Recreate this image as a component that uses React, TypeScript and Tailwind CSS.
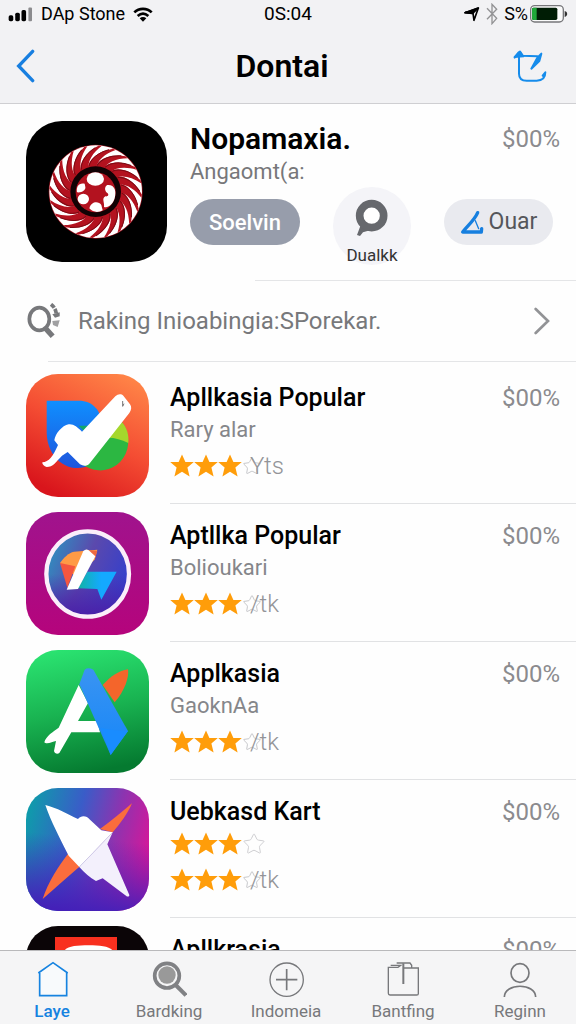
import type { ReactNode } from 'react'
import { Star } from 'lucide-react'

const blades = Array.from({ length: 20 }, (_, i) => i * 18)

function WheelArt() {
  return (
    <svg viewBox="78 48 423 423" className="h-full w-full" aria-hidden="true">
      <rect x="78" y="48" width="423" height="423" fill="#000" />
      <g transform="translate(287 260)">
        <circle r="141" fill="#8f0d18" />
        <circle r="139" fill="#fff" />
        {blades.map((angle) => (
          <g key={angle} transform={`rotate(${angle})`}>
            <path d="M-24 -70C-22 -96 6 -122 52 -129L60 -125C28 -114 4 -94 0 -68Z" fill="#b3121f" />
            <path d="M-20 -76C-16 -98 8 -118 40 -126" fill="none" stroke="#7c0a14" strokeWidth="3" />
          </g>
        ))}
        <circle r="76" fill="#120204" />
      </g>
      <circle cx="287" cy="262" r="60" fill="#b3121f" />
      <ellipse cx="286" cy="222" rx="26" ry="20" fill="#fff" />
      <path d="M254 236C236 232 228 246 231 262C244 264 258 256 256 246Z" fill="#fff" />
      <ellipse cx="250" cy="282" rx="17" ry="16" fill="#fff" />
      <path d="M268 310C274 288 296 288 304 300L308 316C294 324 278 322 268 310Z" fill="#fff" />
      <path d="M322 240C344 238 350 258 344 280C338 300 324 310 312 306C314 290 304 282 316 274C324 276 328 268 322 264C314 258 312 246 322 240Z" fill="#fff" />
    </svg>
  )
}

function CheckArt() {
  return (
    <svg viewBox="78 27 369 369" className="h-full w-full" aria-hidden="true">
      <defs>
        <linearGradient id="check-bg" x1="0.8" y1="0" x2="0.3" y2="1">
          <stop offset="0" stopColor="#ff8447" />
          <stop offset="0.5" stopColor="#f44d33" />
          <stop offset="1" stopColor="#d9151c" />
        </linearGradient>
        <linearGradient id="check-blue" x1="0" y1="0" x2="0" y2="1">
          <stop offset="0" stopColor="#0f8fff" />
          <stop offset="1" stopColor="#1f55dc" />
        </linearGradient>
      </defs>
      <rect x="78" y="27" width="369" height="369" fill="url(#check-bg)" />
      <path d="M140 107H236C280 107 304 138 306 180L270 300C236 318 190 310 162 272C146 250 140 224 140 200Z" fill="url(#check-blue)" />
      <path d="M236 182H270L262 208Z" fill="#12a86b" />
      <path d="M366 172C384 194 388 226 382 252C370 296 332 318 296 316C278 316 258 306 246 298Z" fill="#2cb742" />
      <path d="M366 172C382 190 387 212 385 234C364 224 346 218 324 218Z" fill="#a5d72c" />
      <path d="M346 94C354 86 364 86 370 92L390 118C396 126 394 136 388 144L268 296C260 304 250 304 240 298L203 261L186 272C166 292 160 306 140 306C132 304 126 298 127 292C146 292 160 272 174 240L163 226C166 206 186 182 206 178C220 176 232 186 246 200Z" fill="#fff" />
      <path d="M368 108V124L372 116" fill="none" stroke="#777" strokeWidth="3" />
    </svg>
  )
}

function RoundArt() {
  return (
    <svg viewBox="78 37 369 369" className="h-full w-full" aria-hidden="true">
      <defs>
        <linearGradient id="round-bg" x1="0" y1="0" x2="0" y2="1">
          <stop offset="0" stopColor="#a0138d" />
          <stop offset="1" stopColor="#b5047c" />
        </linearGradient>
        <linearGradient id="round-disc" x1="0" y1="0.3" x2="1" y2="0.7">
          <stop offset="0" stopColor="#2f8fc0" />
          <stop offset="0.45" stopColor="#5b49ad" />
          <stop offset="1" stopColor="#2f3ed0" />
        </linearGradient>
        <linearGradient id="round-shade" x1="0" y1="0" x2="0" y2="1">
          <stop offset="0.5" stopColor="#4a20a8" stopOpacity="0" />
          <stop offset="1" stopColor="#4a20a8" />
        </linearGradient>
        <linearGradient id="round-cyan" x1="0" y1="0" x2="1" y2="0">
          <stop offset="0" stopColor="#12b3a4" />
          <stop offset="0.6" stopColor="#14a9ff" />
        </linearGradient>
      </defs>
      <rect x="78" y="37" width="369" height="369" fill="url(#round-bg)" />
      <ellipse cx="263" cy="223" rx="124" ry="128" fill="url(#round-disc)" />
      <ellipse cx="263" cy="223" rx="124" ry="128" fill="url(#round-shade)" stroke="#fbeefa" strokeWidth="13" />
      <path d="M180 190C192 172 206 160 222 156L292 150L284 180L226 230Z" fill="#ff9a45" />
      <path d="M180 190L226 200L202 264Z" fill="#f4563f" />
      <path d="M258 150L292 154L286 174Z" fill="#ee6840" />
      <path d="M262 216H350L304 300L292 268L234 266Z" fill="url(#round-cyan)" />
      <path d="M250 154Q258 146 266 152L286 170L234 268L200 270Z" fill="#fff" />
    </svg>
  )
}

function LetterArt() {
  return (
    <svg viewBox="78 31 369 369" className="h-full w-full" aria-hidden="true">
      <defs>
        <linearGradient id="green-bg" x1="0.3" y1="0" x2="0.5" y2="1">
          <stop offset="0" stopColor="#2ae270" />
          <stop offset="0.5" stopColor="#19b351" />
          <stop offset="1" stopColor="#057a30" />
        </linearGradient>
        <linearGradient id="green-blue" x1="0" y1="0" x2="0" y2="1">
          <stop offset="0" stopColor="#3a94f2" />
          <stop offset="1" stopColor="#1686f8" />
        </linearGradient>
      </defs>
      <rect x="78" y="31" width="369" height="369" fill="url(#green-bg)" />
      <path d="M308 136C334 108 356 94 384 89C388 112 374 154 344 188Z" fill="#f4652b" />
      <path d="M236 136L264 190L234 244H292L300 278H214L178 340C172 344 164 342 162 334L168 304C158 306 140 316 133 308C138 288 160 276 176 264Z" fill="#fff" />
      <path d="M254 90Q264 82 280 90L384 274L332 346L238 134Z" fill="url(#green-blue)" />
      <path d="M302 264C334 272 360 272 384 274L332 346Z" fill="#198cff" />
    </svg>
  )
}

function PlaneArt() {
  return (
    <svg viewBox="78 23 369 369" className="h-full w-full" aria-hidden="true">
      <defs>
        <linearGradient id="plane-bg" x1="0" y1="0.25" x2="1" y2="0.5">
          <stop offset="0" stopColor="#0f9bab" />
          <stop offset="0.4" stopColor="#3a5cc8" />
          <stop offset="0.7" stopColor="#8c34b0" />
          <stop offset="1" stopColor="#d4189a" />
        </linearGradient>
        <linearGradient id="plane-shade" x1="0.5" y1="0" x2="0.4" y2="1">
          <stop offset="0.4" stopColor="#4420b8" stopOpacity="0" />
          <stop offset="1" stopColor="#4420b8" />
        </linearGradient>
      </defs>
      <rect x="78" y="23" width="369" height="369" fill="url(#plane-bg)" />
      <rect x="78" y="23" width="369" height="369" fill="url(#plane-shade)" />
      <path d="M396 69C384 98 362 128 338 156L300 146C334 122 366 94 396 69Z" fill="#fb6d3c" />
      <path d="M206 218L240 258C202 290 164 326 128 356C144 306 176 256 206 218Z" fill="#fb6d3c" />
      <path d="M136 74C170 82 204 102 234 116C244 104 260 106 270 118L304 150L338 156L238 260L206 226C180 174 152 122 136 74Z" fill="#fff" />
      <path d="M338 156L322 192L388 344C388 350 382 350 378 346L308 294L288 302C270 292 254 278 238 260Z" fill="#f3f0fc" />
      <path d="M338 156L238 260" fill="none" stroke="#cfcbe4" strokeWidth="2" />
    </svg>
  )
}

function DarkArt() {
  return (
    <svg viewBox="78 48 369 369" className="h-full w-full" aria-hidden="true">
      <rect x="78" y="48" width="369" height="369" fill="#0b0507" />
      <rect x="165" y="81" width="186" height="190" fill="#f8301f" />
      <path d="M192 124C200 108 230 106 266 106C302 106 332 110 340 124V190H192Z" fill="#fff" />
    </svg>
  )
}

const apps = [
  { name: 'Apllkasia Popular', subtitle: 'Rary alar', count: 'Yts', art: <CheckArt /> },
  { name: 'Aptllka Popular', subtitle: 'Bolioukari', count: '/tk', art: <RoundArt /> },
  { name: 'Applkasia', subtitle: 'GaoknAa', count: '/tk', art: <LetterArt /> },
  { name: 'Uebkasd Kart', subtitle: '', count: '/tk', art: <PlaneArt /> },
  { name: 'Apllkrasia', subtitle: '', count: '', art: <DarkArt /> },
]

const tabs = [
  {
    label: 'Laye',
    icon: (
      <svg viewBox="102 153 108 108" className="h-9 w-9" fill="#f8fafc" stroke="currentColor" strokeWidth="5" aria-hidden="true">
        <path d="M119 186V257H200V186" />
        <path d="M115 189L159 158L203 189" />
      </svg>
    ),
  },
  {
    label: 'Bardking',
    icon: (
      <svg viewBox="456 153 108 108" className="h-9 w-9" fill="none" stroke="#808184" aria-hidden="true">
        <path d="M530 225L561 256" strokeWidth="12" />
        <circle cx="504" cy="197" r="37" strokeWidth="11" />
        <circle cx="504" cy="195" r="26" fill="#999" stroke="none" />
      </svg>
    ),
  },
  {
    label: 'Indomeia',
    icon: (
      <svg viewBox="0 0 108 108" className="h-9 w-9" fill="none" stroke="currentColor" strokeWidth="4" aria-hidden="true">
        <circle cx="56" cy="56" r="50" />
        <path d="M56 24V88M24 56H88" strokeWidth="5" />
      </svg>
    ),
  },
  {
    label: 'Bantfing',
    icon: (
      <svg viewBox="291 153 108 108" className="h-9 w-9" fill="none" stroke="currentColor" strokeWidth="4" aria-hidden="true">
        <path d="M346 174H391V251C391 254 389 255 386 255H306C303 255 301 253 301 250V172H330L338 166H308" />
        <path d="M326 159H366L371 166V174" />
        <path d="M346 160V222" strokeWidth="6" />
      </svg>
    ),
  },
  {
    label: 'Reginn',
    icon: (
      <svg viewBox="644 153 108 108" className="h-9 w-9" fill="none" stroke="currentColor" strokeWidth="5" aria-hidden="true">
        <ellipse cx="698" cy="189" rx="27" ry="28" />
        <path d="M651 261C651 218 745 218 745 261" />
      </svg>
    ),
  },
]

function Stars() {
  return (
    <>
      {[0, 1, 2].map((i) => (
        <svg key={i} viewBox="0 0 24 24" className="h-6 w-6" aria-hidden="true">
          <path d="M12 0.5L15.4 8H23.8L17.4 13.4L19.6 22.4L12 17.8L4.4 22.4L6.6 13.4L0.2 8H8.6Z" fill="#ff9d0a" />
        </svg>
      ))}
    </>
  )
}

function AppIcon({ children }: { children: ReactNode }) {
  return <div className="h-[123px] w-[123px] shrink-0 overflow-hidden rounded-[32px]">{children}</div>
}

function StatusBar() {
  return (
    <div className="grid h-7 grid-cols-3 items-center pl-2 pr-2 text-lg leading-7 text-black">
      <div className="flex items-center gap-2 whitespace-nowrap">
        <svg viewBox="0 0 76 45" className="h-[15px] w-[25px]" aria-hidden="true">
          <rect x="2" y="25" width="14" height="18" rx="5" />
          <rect x="22" y="17" width="14" height="26" rx="5" />
          <rect x="41" y="9" width="14" height="34" rx="5" />
          <rect x="62" y="1" width="11" height="42" rx="3" fill="#8b8b8e" />
        </svg>
        DAp Stone
        <svg viewBox="0 0 60 45" className="h-[15px] w-5" fill="none" stroke="#000" strokeWidth="8" aria-hidden="true">
          <path d="M4 16C18 2 42 2 56 16" />
          <path d="M14 27C24 18 36 18 46 27" />
          <path d="M20 34C26 29 34 29 40 34L30 44Z" fill="#000" stroke="none" />
        </svg>
      </div>
      <time className="text-center text-[19px]">0S:04</time>
      <div className="flex items-center justify-end gap-1.5">
        <svg viewBox="0 0 48 48" className="h-4 w-4" fill="none" stroke="#000" strokeWidth="5" strokeLinejoin="round" aria-hidden="true">
          <path d="M3 20L43 6L30 43L27 22Z" />
          <path d="M3 20L43 6L26 22Z" fill="#000" />
        </svg>
        <svg viewBox="0 0 36 66" className="h-[22px] w-3" fill="none" stroke="#929294" strokeWidth="4" aria-hidden="true">
          <path d="M3 16L32 46L18 62V4L32 19L3 49" />
        </svg>
        <span>S%</span>
        <svg viewBox="0 0 114 54" className="-ml-1 h-[18px] w-[38px]" aria-hidden="true">
          <rect x="2" y="2" width="98" height="49" rx="12" fill="#fafafa" stroke="#77777a" strokeWidth="4" />
          <rect x="6" y="8" width="76" height="37" rx="5" fill="#001d05" />
          <path d="M11 8H20V45H11C8 45 6 43 6 40V13C6 10 8 8 11 8Z" fill="#20a83a" />
          <path d="M104 18C114 20 114 34 104 36Z" fill="#333" />
        </svg>
      </div>
    </div>
  )
}

export default function App() {
  return (
    <div className="flex h-screen flex-col overflow-hidden bg-[#fefefe] font-[Roboto,'Liberation_Sans',sans-serif] text-black">
      <header className="shrink-0 border-b border-[#cfcfd2] bg-[#f2f2f4]">
        <StatusBar />
        <div className="grid h-[75px] grid-cols-3 items-center pl-4 pr-7">
          <button type="button" aria-label="Back" className="w-6">
            <svg viewBox="0 0 60 102" className="h-[34px] w-5" fill="none" stroke="#187fe0" strokeWidth="10" strokeLinecap="round" aria-hidden="true">
              <path d="M50 7L8 51L50 95" />
            </svg>
          </button>
          <h1 className="text-center text-[32px] font-semibold leading-9">Dontai</h1>
          <button type="button" aria-label="Edit" className="justify-self-end">
            <svg viewBox="676 144 108 102" className="h-[34px] w-9" fill="none" stroke="#168ceb" strokeWidth="6" strokeLinecap="round" strokeLinejoin="round" aria-hidden="true">
              <path d="M697 166V218C697 232 706 239 720 239H750C766 239 776 230 776 214L768 224" />
              <path d="M684 170C692 162 692 154 700 152L706 164L752 166" />
              <path d="M764 158L758 180L734 203L752 170Z" fill="#168ceb" />
              <path d="M684 168L700 152L710 166Z" fill="#168ceb" />
            </svg>
          </button>
        </div>
      </header>

      <main className="min-h-0 flex-1 overflow-hidden">
        <section className="flex gap-[23px] pb-[15px] pl-[26px] pr-4 pt-[17px]">
          <div className="h-[141px] w-[141px] shrink-0 overflow-hidden rounded-[36px]"><WheelArt /></div>
          <div className="min-w-0 flex-1">
            <div className="flex items-center justify-between leading-9">
              <h2 className="text-3xl font-semibold leading-9">Nopamaxia.</h2>
              <span className="text-2xl leading-9 text-[#8b8b8e]">$00%</span>
            </div>
            <p className="text-[22px] leading-[30px] text-[#77777a]">Angaomt(a:</p>
            <div className="flex items-start gap-[33px]">
              <button type="button" className="mt-3 h-[46px] w-[110px] rounded-full bg-[#979dab] text-[22px] font-medium text-white">Soelvin</button>
              <button type="button" className="flex h-[78px] w-[78px] flex-col items-center rounded-full bg-[#f4f4f8] pt-3 text-[17px] text-[#333]">
                <svg viewBox="528 270 102 114" className="h-[38px] w-[34px] shrink-0" aria-hidden="true">
                  <path d="M534 378L546 346L578 362L552 370L543 381Z" fill="#66686d" />
                  <circle cx="578" cy="320" r="36" fill="#fff" stroke="#66686d" strokeWidth="23" />
                </svg>
                <span className="mt-2 leading-5">Dualkk</span>
              </button>
              <button type="button" className="mt-3 flex h-[46px] w-[109px] items-center justify-center gap-1 rounded-full bg-[#e9eaef] text-[23px] text-[#55565a]">
                <svg viewBox="840 294 75 75" className="h-[25px] w-[25px]" fill="none" stroke="#167fdf" strokeWidth="10" strokeLinecap="round" strokeLinejoin="round" aria-hidden="true">
                  <path d="M893 302C884 324 864 340 848 360H904L905 350" />
                  <path d="M886 326L896 350" strokeWidth="4" />
                </svg>
                Ouar
              </button>
            </div>
          </div>
        </section>
        <div className="ml-[255px] h-px bg-[#e4e5e7]" />

        <a href="#ranking" className="flex h-20 items-center pl-[26px] pr-[26px] text-[#77787b]">
          <svg viewBox="72 94 102 108" className="h-9 w-9 shrink-0" fill="none" stroke="currentColor" strokeWidth="11" aria-hidden="true">
            <ellipse cx="109" cy="142" rx="30" ry="34" />
            <path d="M126 168L149 194" strokeWidth="16" />
            <path d="M144 98C154 106 158 114 160 126" strokeWidth="11" strokeDasharray="14 4" />
            <path d="M148 128L170 122V134L156 138Z" fill="currentColor" stroke="none" />
            <path d="M148 148L170 146L164 166L150 160Z" fill="currentColor" stroke="none" opacity="0.7" />
          </svg>
          <span className="ml-4 flex-1 whitespace-nowrap text-2xl leading-8">Raking Inioabingia:SPorekar.</span>
          <svg viewBox="0 0 48 84" className="h-7 w-4" fill="none" stroke="#929396" strokeWidth="8" strokeLinecap="round" aria-hidden="true">
            <path d="M5 6L42 42L5 78" />
          </svg>
        </a>
        <div className="ml-12 h-px bg-[#e4e5e7]" />

        <ul className="pt-1">
          {apps.map((app) => (
            <li key={app.name} className="flex items-start gap-[21px] pl-[26px] pt-2">
              <AppIcon>{app.art}</AppIcon>
              <div className="flex min-h-[130px] min-w-0 flex-1 items-start justify-between border-b border-[#e1e2e4] pr-4 pt-2">
                <div>
                  <h3 className="text-[25px] font-medium leading-8">{app.name}</h3>
                  {app.subtitle ? (
                    <p className="text-[22px] leading-8 text-[#85868a]">{app.subtitle}</p>
                  ) : (
                    <div className="flex h-8 items-center">
                      <Stars />
                      <Star className="h-6 w-6 text-[#cfcfd2]" strokeWidth={1} />
                    </div>
                  )}
                  <div className="mt-2 flex h-6 items-center text-2xl font-light leading-6 text-[#939498]">
                    <Stars />
                    <Star className="h-5 w-5 text-[#bcbdc0]" strokeWidth={1} />
                    <span className="-ml-3">{app.count}</span>
                  </div>
                </div>
                <span className="text-2xl leading-8 text-[#8b8b8e]">$00%</span>
              </div>
            </li>
          ))}
        </ul>
      </main>

      <nav className="flex h-[74px] shrink-0 justify-between border-t border-[#b9b9bb] bg-[#f5f5f6] pl-3 pr-4 pt-2.5">
        {tabs.map((tab, i) => (
          <button key={tab.label} type="button" className={`flex w-20 flex-col items-center gap-1 text-[17px] leading-5 ${i === 0 ? 'font-medium text-[#1683e0]' : 'text-[#77787b]'}`}>
            {tab.icon}
            {tab.label}
          </button>
        ))}
      </nav>
    </div>
  )
}
